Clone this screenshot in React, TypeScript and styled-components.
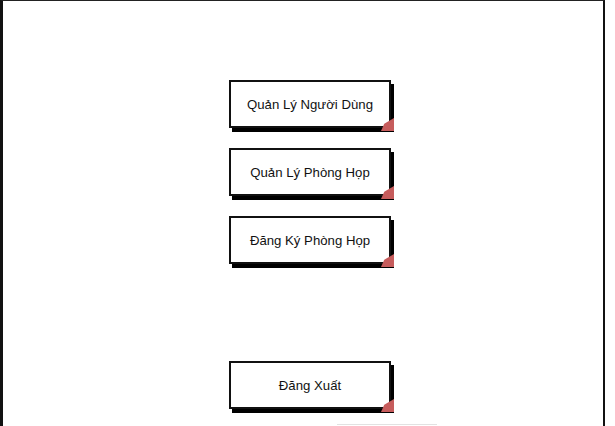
import styled, { createGlobalStyle } from 'styled-components'

const GlobalStyle = createGlobalStyle`
  html, body {
    margin: 0;
    padding: 0;
    background: #ffffff;
    font-family: 'Liberation Sans', Arial, sans-serif;
  }
`

const menu = ['Quản Lý Người Dùng', 'Quản Lý Phòng Họp', 'Đăng Ký Phòng Họp']

export default function App() {
  return (
    <>
      <GlobalStyle />
      <Frame>
        <Menu>
          {menu.map((label) => (
            <SketchButton key={label}>
              {label}
              <Fold />
            </SketchButton>
          ))}
        </Menu>
        <Logout>
          <SketchButton>
            Đăng Xuất
            <Fold />
          </SketchButton>
        </Logout>
        <BottomHint />
      </Frame>
    </>
  )
}

const Frame = styled.div`
  position: relative;
  box-sizing: border-box;
  width: 605px;
  height: 426px;
  border-left: 3px solid #111;
  border-right: 2px solid #111;
  border-top: 1px solid #222;
  display: flex;
  flex-direction: column;
  align-items: flex-start;
  padding-left: 226px;
  padding-top: 79px;
  overflow: hidden;
`

const Menu = styled.div`
  display: flex;
  flex-direction: column;
  gap: 20px;
`

const Logout = styled.div`
  margin-top: 97px;
`

const SketchButton = styled.div`
  position: relative;
  box-sizing: border-box;
  width: 162px;
  height: 48px;
  border: 2px solid #111;
  background: #fff;
  box-shadow: 3px 4px 0 #000;
  display: flex;
  align-items: center;
  justify-content: center;
  font-size: 13.2px;
  color: #111;
  cursor: pointer;
`

const Fold = styled.span`
  position: absolute;
  right: -5px;
  bottom: -5px;
  width: 13px;
  height: 13px;
  background: #c65c5c;
  clip-path: polygon(100% 0, 100% 100%, 0 100%, 25% 45%);
`

const BottomHint = styled.div`
  position: absolute;
  left: 334px;
  bottom: 1px;
  width: 100px;
  height: 1px;
  background: #e2e2e2;
`
